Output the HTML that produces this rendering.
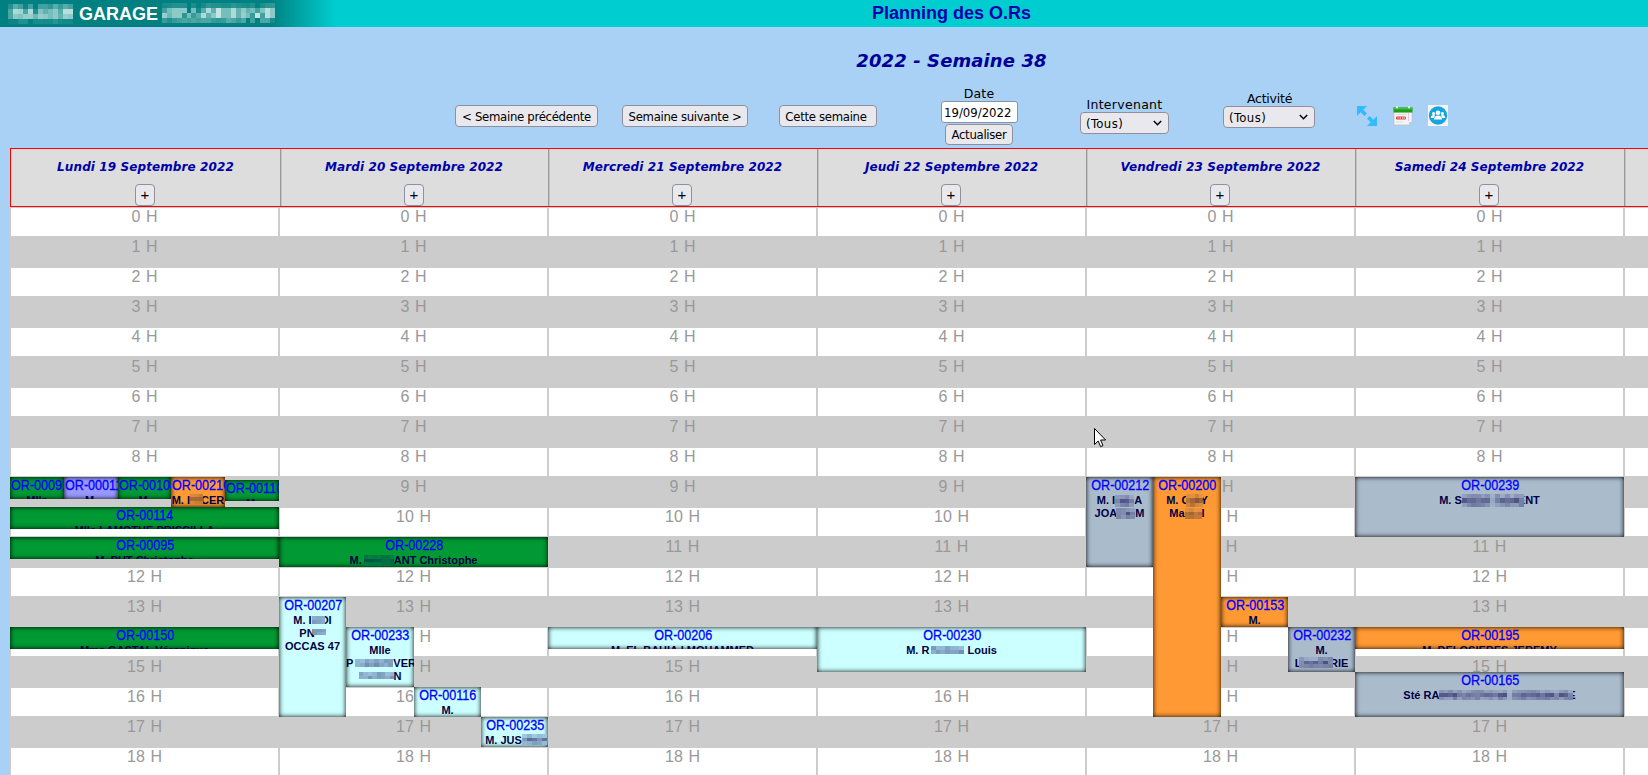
<!DOCTYPE html><html lang="fr"><head><meta charset="utf-8"><title>Planning des O.Rs</title><style>
*{box-sizing:border-box;margin:0;padding:0}
html,body{width:1648px;height:775px;overflow:hidden;background:#A9D0F5;}
body{font-family:"DejaVu Sans","Liberation Sans",sans-serif;font-size:13px;color:#000;position:relative}
#page{position:absolute;left:0;top:0;width:1903px;height:775px;overflow:hidden}
#top{position:absolute;left:0;top:0;width:1903px;height:27px;background:linear-gradient(to right,#008080 0px,#008080 270px,#00CDD0 335px,#00CDD0 100%)}
#top .g{position:absolute;left:79px;top:4px;font:bold 18px/21px "Liberation Sans",sans-serif;color:#fff;white-space:nowrap}
#top .t{position:absolute;left:0;width:1903px;top:3px;text-align:center;font:bold 18px/21px "Liberation Sans",sans-serif;color:#0000AA;white-space:nowrap}
h2{letter-spacing:.1px;position:absolute;left:0;width:1903px;top:50px;text-align:center;font:italic bold 18px/22px "DejaVu Sans",sans-serif;color:#000099;white-space:nowrap}
.btn{overflow:hidden;position:absolute;height:22px;border:1px solid #8F8F9D;border-radius:4px;background:#E9E9ED;font:13px/21px "DejaVu Sans Condensed","DejaVu Sans",sans-serif;text-align:center;white-space:nowrap;color:#000;letter-spacing:-0.3px}
.lbl{position:absolute;font:12.5px/16px "DejaVu Sans",sans-serif;text-align:center;white-space:nowrap}
.inp{overflow:hidden;position:absolute;border:1px solid #8F8F9D;border-radius:3px;background:#fff;font:13px/22px "DejaVu Sans Condensed","DejaVu Sans",sans-serif;padding-left:2px;white-space:nowrap}
.sel{overflow:hidden;position:absolute;height:22px;border:1px solid #8F8F9D;border-radius:4px;background:#E9E9ED;font:13px/21px "DejaVu Sans Condensed","DejaVu Sans",sans-serif;padding-left:5px;white-space:nowrap;letter-spacing:.4px}
.sel svg{position:absolute;right:6px;top:7px}
#hd{position:absolute;left:10px;top:148px;width:1883px;height:59px;background:#DDDDDD;border:1px solid #FF0000}
.th{position:absolute;top:0;height:57px;text-align:center;font:italic bold 12px/15px "DejaVu Sans",sans-serif;color:#0000AA;white-space:nowrap;padding-top:11px;letter-spacing:.1px}
.thd{position:absolute;top:0;height:57px;width:2px;background:linear-gradient(to right,#999 0,#999 1px,#c4c4c4 1px)}
.plus{letter-spacing:0;position:absolute;top:35px;width:20px;height:22px;border:1px solid #8F8F9D;border-radius:4px;background:#E9E9ED;font:15px/20px "Liberation Sans",sans-serif;color:#000;font-style:normal;font-weight:normal;text-align:center}
#grid{position:absolute;left:10px;top:207px;width:1883px;height:580px;background:#CCCCCC}
.c{position:absolute;background:#fff;height:28px}
.h{position:absolute;width:267px;text-align:center;font:16px/18px "Liberation Sans",sans-serif;color:#999999;white-space:nowrap;word-spacing:1.2px}
.e{position:absolute;overflow:hidden;text-align:center;padding-top:1px;box-shadow:inset 0 0 5px #000;font:bold 11px/13px "Liberation Sans",sans-serif;color:#000044;white-space:normal}
.e div{white-space:nowrap}.e div svg{position:relative;z-index:1}
.e b{display:block;position:relative;top:-1px;padding-left:1px;font:normal 14px/16px "Liberation Sans",sans-serif;color:#0000FF;white-space:nowrap;-webkit-text-stroke:.3px #0000FF}
.e b span{display:inline-block;transform:scaleX(.9);transform-origin:50% 50%}
.e.nar b{text-align:left;padding-left:1px}.e.nar b span{transform-origin:0 50%}
.gr{background:#009933}.or{background:#FF9933}.cy{background:#CCFFFF}.lv{background:#9999FF}.sl{background:#AABBCC}
</style></head><body><div id="page">
<div id="top"><svg style="position:absolute;left:8px;top:4px" width="65" height="20" viewBox="0 0 65 20" preserveAspectRatio="none" shape-rendering="crispEdges"><rect x="0" y="0" width="5" height="5" fill="rgba(215,240,236,0.15)"/><rect x="5" y="0" width="5" height="5" fill="rgba(215,240,236,0.4)"/><rect x="10" y="0" width="5" height="5" fill="rgba(215,240,236,0.3)"/><rect x="15" y="0" width="5" height="5" fill="rgba(215,240,236,0.05)"/><rect x="20" y="0" width="5" height="5" fill="rgba(215,240,236,0.3)"/><rect x="30" y="0" width="5" height="5" fill="rgba(215,240,236,0.3)"/><rect x="35" y="0" width="5" height="5" fill="rgba(215,240,236,0.3)"/><rect x="40" y="0" width="5" height="5" fill="rgba(215,240,236,0.22)"/><rect x="45" y="0" width="5" height="5" fill="rgba(215,240,236,0.4)"/><rect x="50" y="0" width="5" height="5" fill="rgba(215,240,236,0.25)"/><rect x="55" y="0" width="5" height="5" fill="rgba(215,240,236,0.4)"/><rect x="60" y="0" width="5" height="5" fill="rgba(215,240,236,0.3)"/><rect x="0" y="5" width="5" height="5" fill="rgba(215,240,236,0.35)"/><rect x="5" y="5" width="5" height="5" fill="rgba(215,240,236,0.8)"/><rect x="10" y="5" width="5" height="5" fill="rgba(215,240,236,0.75)"/><rect x="15" y="5" width="5" height="5" fill="rgba(215,240,236,0.35)"/><rect x="20" y="5" width="5" height="5" fill="rgba(215,240,236,0.8)"/><rect x="25" y="5" width="5" height="5" fill="rgba(215,240,236,0.15)"/><rect x="30" y="5" width="5" height="5" fill="rgba(215,240,236,0.6)"/><rect x="35" y="5" width="5" height="5" fill="rgba(215,240,236,0.45)"/><rect x="40" y="5" width="5" height="5" fill="rgba(215,240,236,0.55)"/><rect x="45" y="5" width="5" height="5" fill="rgba(215,240,236,0.65)"/><rect x="50" y="5" width="5" height="5" fill="rgba(215,240,236,0.4)"/><rect x="55" y="5" width="5" height="5" fill="rgba(215,240,236,0.85)"/><rect x="60" y="5" width="5" height="5" fill="rgba(215,240,236,0.85)"/><rect x="0" y="10" width="5" height="5" fill="rgba(215,240,236,0.35)"/><rect x="5" y="10" width="5" height="5" fill="rgba(215,240,236,0.65)"/><rect x="10" y="10" width="5" height="5" fill="rgba(215,240,236,0.6)"/><rect x="15" y="10" width="5" height="5" fill="rgba(215,240,236,0.7)"/><rect x="20" y="10" width="5" height="5" fill="rgba(215,240,236,0.7)"/><rect x="25" y="10" width="5" height="5" fill="rgba(215,240,236,0.5)"/><rect x="30" y="10" width="5" height="5" fill="rgba(215,240,236,0.7)"/><rect x="35" y="10" width="5" height="5" fill="rgba(215,240,236,0.65)"/><rect x="40" y="10" width="5" height="5" fill="rgba(215,240,236,0.55)"/><rect x="45" y="10" width="5" height="5" fill="rgba(215,240,236,0.65)"/><rect x="50" y="10" width="5" height="5" fill="rgba(215,240,236,0.45)"/><rect x="55" y="10" width="5" height="5" fill="rgba(215,240,236,0.7)"/><rect x="60" y="10" width="5" height="5" fill="rgba(215,240,236,0.65)"/><rect x="0" y="15" width="5" height="5" fill="rgba(215,240,236,0.05)"/><rect x="5" y="15" width="5" height="5" fill="rgba(215,240,236,0.05)"/><rect x="10" y="15" width="5" height="5" fill="rgba(215,240,236,0.15)"/><rect x="15" y="15" width="5" height="5" fill="rgba(215,240,236,0.15)"/><rect x="25" y="15" width="5" height="5" fill="rgba(215,240,236,0.1)"/><rect x="30" y="15" width="5" height="5" fill="rgba(215,240,236,0.12)"/><rect x="35" y="15" width="5" height="5" fill="rgba(215,240,236,0.1)"/><rect x="40" y="15" width="5" height="5" fill="rgba(215,240,236,0.1)"/><rect x="45" y="15" width="5" height="5" fill="rgba(215,240,236,0.18)"/><rect x="50" y="15" width="5" height="5" fill="rgba(215,240,236,0.1)"/><rect x="55" y="15" width="5" height="5" fill="rgba(215,240,236,0.08)"/><rect x="60" y="15" width="5" height="5" fill="rgba(215,240,236,0.08)"/></svg><span class="g">GARAGE</span><svg style="position:absolute;left:162px;top:3px" width="113" height="20" viewBox="0 0 115 20" preserveAspectRatio="none" shape-rendering="crispEdges"><rect x="0" y="0" width="5" height="5" fill="rgba(215,240,236,0.1)"/><rect x="5" y="0" width="5" height="5" fill="rgba(215,240,236,0.12)"/><rect x="10" y="0" width="5" height="5" fill="rgba(215,240,236,0.15)"/><rect x="15" y="0" width="5" height="5" fill="rgba(215,240,236,0.15)"/><rect x="20" y="0" width="5" height="5" fill="rgba(215,240,236,0.15)"/><rect x="30" y="0" width="5" height="5" fill="rgba(215,240,236,0.12)"/><rect x="35" y="0" width="5" height="5" fill="rgba(215,240,236,0.02)"/><rect x="40" y="0" width="5" height="5" fill="rgba(215,240,236,0.1)"/><rect x="45" y="0" width="5" height="5" fill="rgba(215,240,236,0.2)"/><rect x="50" y="0" width="5" height="5" fill="rgba(215,240,236,0.15)"/><rect x="55" y="0" width="5" height="5" fill="rgba(215,240,236,0.15)"/><rect x="60" y="0" width="5" height="5" fill="rgba(215,240,236,0.12)"/><rect x="65" y="0" width="5" height="5" fill="rgba(215,240,236,0.12)"/><rect x="70" y="0" width="5" height="5" fill="rgba(215,240,236,0.2)"/><rect x="75" y="0" width="5" height="5" fill="rgba(215,240,236,0.15)"/><rect x="80" y="0" width="5" height="5" fill="rgba(215,240,236,0.12)"/><rect x="85" y="0" width="5" height="5" fill="rgba(215,240,236,0.1)"/><rect x="90" y="0" width="5" height="5" fill="rgba(215,240,236,0.15)"/><rect x="95" y="0" width="5" height="5" fill="rgba(215,240,236,0.02)"/><rect x="100" y="0" width="5" height="5" fill="rgba(215,240,236,0.12)"/><rect x="105" y="0" width="5" height="5" fill="rgba(215,240,236,0.2)"/><rect x="110" y="0" width="5" height="5" fill="rgba(215,240,236,0.2)"/><rect x="0" y="5" width="5" height="5" fill="rgba(215,240,236,0.3)"/><rect x="5" y="5" width="5" height="5" fill="rgba(215,240,236,0.55)"/><rect x="10" y="5" width="5" height="5" fill="rgba(215,240,236,0.65)"/><rect x="15" y="5" width="5" height="5" fill="rgba(215,240,236,0.65)"/><rect x="20" y="5" width="5" height="5" fill="rgba(215,240,236,0.65)"/><rect x="30" y="5" width="5" height="5" fill="rgba(215,240,236,0.55)"/><rect x="35" y="5" width="5" height="5" fill="rgba(215,240,236,0.1)"/><rect x="40" y="5" width="5" height="5" fill="rgba(215,240,236,0.4)"/><rect x="45" y="5" width="5" height="5" fill="rgba(215,240,236,0.8)"/><rect x="50" y="5" width="5" height="5" fill="rgba(215,240,236,0.45)"/><rect x="55" y="5" width="5" height="5" fill="rgba(215,240,236,0.9)"/><rect x="60" y="5" width="5" height="5" fill="rgba(215,240,236,0.55)"/><rect x="65" y="5" width="5" height="5" fill="rgba(215,240,236,0.55)"/><rect x="70" y="5" width="5" height="5" fill="rgba(215,240,236,0.8)"/><rect x="75" y="5" width="5" height="5" fill="rgba(215,240,236,0.45)"/><rect x="80" y="5" width="5" height="5" fill="rgba(215,240,236,0.65)"/><rect x="85" y="5" width="5" height="5" fill="rgba(215,240,236,0.45)"/><rect x="90" y="5" width="5" height="5" fill="rgba(215,240,236,0.55)"/><rect x="95" y="5" width="5" height="5" fill="rgba(215,240,236,0.3)"/><rect x="100" y="5" width="5" height="5" fill="rgba(215,240,236,0.6)"/><rect x="105" y="5" width="5" height="5" fill="rgba(215,240,236,0.85)"/><rect x="110" y="5" width="5" height="5" fill="rgba(215,240,236,0.65)"/><rect x="0" y="10" width="5" height="5" fill="rgba(215,240,236,0.7)"/><rect x="5" y="10" width="5" height="5" fill="rgba(215,240,236,0.5)"/><rect x="10" y="10" width="5" height="5" fill="rgba(215,240,236,0.65)"/><rect x="15" y="10" width="5" height="5" fill="rgba(215,240,236,0.65)"/><rect x="20" y="10" width="5" height="5" fill="rgba(215,240,236,0.2)"/><rect x="25" y="10" width="5" height="5" fill="rgba(215,240,236,0.55)"/><rect x="30" y="10" width="5" height="5" fill="rgba(215,240,236,0.25)"/><rect x="35" y="10" width="5" height="5" fill="rgba(215,240,236,0.4)"/><rect x="40" y="10" width="5" height="5" fill="rgba(215,240,236,0.8)"/><rect x="45" y="10" width="5" height="5" fill="rgba(215,240,236,0.45)"/><rect x="50" y="10" width="5" height="5" fill="rgba(215,240,236,0.65)"/><rect x="55" y="10" width="5" height="5" fill="rgba(215,240,236,0.9)"/><rect x="60" y="10" width="5" height="5" fill="rgba(215,240,236,0.55)"/><rect x="65" y="10" width="5" height="5" fill="rgba(215,240,236,0.55)"/><rect x="70" y="10" width="5" height="5" fill="rgba(215,240,236,0.8)"/><rect x="75" y="10" width="5" height="5" fill="rgba(215,240,236,0.45)"/><rect x="80" y="10" width="5" height="5" fill="rgba(215,240,236,0.7)"/><rect x="85" y="10" width="5" height="5" fill="rgba(215,240,236,0.55)"/><rect x="90" y="10" width="5" height="5" fill="rgba(215,240,236,0.25)"/><rect x="95" y="10" width="5" height="5" fill="rgba(215,240,236,0.9)"/><rect x="100" y="10" width="5" height="5" fill="rgba(215,240,236,0.3)"/><rect x="105" y="10" width="5" height="5" fill="rgba(215,240,236,0.85)"/><rect x="110" y="10" width="5" height="5" fill="rgba(215,240,236,0.65)"/><rect x="0" y="15" width="5" height="5" fill="rgba(215,240,236,0.25)"/><rect x="5" y="15" width="5" height="5" fill="rgba(215,240,236,0.15)"/><rect x="10" y="15" width="5" height="5" fill="rgba(215,240,236,0.25)"/><rect x="15" y="15" width="5" height="5" fill="rgba(215,240,236,0.3)"/><rect x="20" y="15" width="5" height="5" fill="rgba(215,240,236,0.35)"/><rect x="25" y="15" width="5" height="5" fill="rgba(215,240,236,0.3)"/><rect x="30" y="15" width="5" height="5" fill="rgba(215,240,236,0.35)"/><rect x="35" y="15" width="5" height="5" fill="rgba(215,240,236,0.3)"/><rect x="40" y="15" width="5" height="5" fill="rgba(215,240,236,0.35)"/><rect x="45" y="15" width="5" height="5" fill="rgba(215,240,236,0.35)"/><rect x="50" y="15" width="5" height="5" fill="rgba(215,240,236,0.25)"/><rect x="55" y="15" width="5" height="5" fill="rgba(215,240,236,0.22)"/><rect x="60" y="15" width="5" height="5" fill="rgba(215,240,236,0.25)"/><rect x="65" y="15" width="5" height="5" fill="rgba(215,240,236,0.4)"/><rect x="70" y="15" width="5" height="5" fill="rgba(215,240,236,0.35)"/><rect x="75" y="15" width="5" height="5" fill="rgba(215,240,236,0.25)"/><rect x="80" y="15" width="5" height="5" fill="rgba(215,240,236,0.35)"/><rect x="90" y="15" width="5" height="5" fill="rgba(215,240,236,0.3)"/><rect x="100" y="15" width="5" height="5" fill="rgba(215,240,236,0.35)"/><rect x="105" y="15" width="5" height="5" fill="rgba(215,240,236,0.35)"/><rect x="110" y="15" width="5" height="5" fill="rgba(215,240,236,0.1)"/></svg><div class="t">Planning des O.Rs</div></div>
<h2>2022 - Semaine 38</h2>
<div class="btn" style="left:455px;top:105px;width:143px">&lt; Semaine précédente</div>
<div class="btn" style="left:622px;top:105px;width:126px">Semaine suivante &gt;</div>
<div class="btn" style="left:779px;top:105px;width:98px;padding-right:4px">Cette semaine</div>
<div class="lbl" style="left:929px;top:86px;width:100px;letter-spacing:.17px">Date</div>
<div class="inp" style="left:941px;top:101px;width:77px;height:22px">19/09/2022</div>
<div class="btn" style="left:945px;top:124px;width:68px;height:21px;line-height:19px">Actualiser</div>
<div class="lbl" style="left:1074.500px;top:97px;width:100px;letter-spacing:.29px">Intervenant</div>
<div class="sel" style="left:1080px;top:112px;width:89px">(Tous)<svg width="9" height="6" viewBox="0 0 9 6"><path d="M0.800 1 L4.500 4.700 L8.200 1" fill="none" stroke="#000" stroke-width="1.500"/></svg></div>
<div class="lbl" style="left:1219.500px;top:91px;width:100px;letter-spacing:-.23px">Activité</div>
<div class="sel" style="left:1223px;top:106px;width:92px">(Tous)<svg width="9" height="6" viewBox="0 0 9 6"><path d="M0.800 1 L4.500 4.700 L8.200 1" fill="none" stroke="#000" stroke-width="1.500"/></svg></div>
<svg style="position:absolute;left:1357px;top:106px" width="20" height="20" viewBox="0 0 20 20"><g fill="#33BBFF"><path d="M0 0H10L6.300 3.700L10 7.400L7.400 10L3.700 6.300L0 10Z"/><path d="M20 20H10L13.700 16.300L10 12.600L12.600 10L16.300 13.700L20 10Z"/></g></svg>
<svg style="position:absolute;left:1393px;top:106px" width="20" height="20" viewBox="0 0 20 20"><path d="M1 6h18v10l-3 3H1z" fill="#f4f4f4" stroke="#bbb" stroke-width=".6"/><path d="M0.500 1.500h19v5h-19z" fill="#1e9a1e"/><rect x="0.500" y="1.500" width="19" height="2" fill="#3fbf3f"/><rect x="3" y="0" width="2" height="2.500" rx="1" fill="#eee"/><rect x="15" y="0" width="2" height="2.500" rx="1" fill="#eee"/><rect x="3" y="10.500" width="10" height="3" rx="1" fill="#e04040"/><rect x="3" y="8" width="11" height="1" fill="#ddd"/><rect x="3" y="15.500" width="7" height="1" fill="#ddd"/><g fill="#c9f"><rect x="15" y="7.500" width="1" height="1"/><rect x="15" y="9.500" width="1" height="1"/><rect x="15" y="11.500" width="1" height="1"/><rect x="15" y="13.500" width="1" height="1"/></g><g fill="#fff"><rect x="4.500" y="11.500" width="1" height="1"/><rect x="6.500" y="11.500" width="1.500" height="1"/><rect x="9" y="11.500" width="1" height="1"/><rect x="10.500" y="11.500" width="1.500" height="1"/></g><path d="M16 19v-3h3z" fill="#ccc"/></svg>
<svg style="position:absolute;left:1428px;top:105px" width="20" height="21" viewBox="0 0 20 21"><rect width="20" height="21" fill="#F8F5F0"/><circle cx="10" cy="10.500" r="9.200" fill="#12A5E0"/><g fill="#fff"><circle cx="10" cy="7.800" r="2.300"/><path d="M6 14.500c0-3 1.800-4 4-4s4 1 4 4z"/><circle cx="5.600" cy="8.500" r="1.600"/><path d="M2.800 13c0-2.200 1.300-3 2.800-3 .8 0 1.300.2 1.700.5-1 .8-1.500 1.700-1.600 2.500z"/><circle cx="14.400" cy="8.500" r="1.600"/><path d="M17.200 13c0-2.200-1.300-3-2.800-3-.8 0-1.300.2-1.700.5 1 .8 1.500 1.700 1.600 2.500z"/></g></svg>
<div id="hd">
<div class="th" style="left:0px;width:269px">Lundi 19 Septembre 2022<div class="plus" style="left:124px">+</div></div>
<div class="th" style="left:269px;width:268px">Mardi 20 Septembre 2022<div class="plus" style="left:124px">+</div></div>
<div class="thd" style="left:269px"></div>
<div class="th" style="left:537px;width:269px">Mercredi 21 Septembre 2022<div class="plus" style="left:124px">+</div></div>
<div class="thd" style="left:537px"></div>
<div class="th" style="left:806px;width:269px">Jeudi 22 Septembre 2022<div class="plus" style="left:124px">+</div></div>
<div class="thd" style="left:806px"></div>
<div class="th" style="left:1075px;width:269px">Vendredi 23 Septembre 2022<div class="plus" style="left:124px">+</div></div>
<div class="thd" style="left:1075px"></div>
<div class="th" style="left:1344px;width:269px">Samedi 24 Septembre 2022<div class="plus" style="left:124px">+</div></div>
<div class="thd" style="left:1344px"></div>
<div class="th" style="left:1613px;width:269px">Dimanche 25 Septembre 2022<div class="plus" style="left:124px">+</div></div>
<div class="thd" style="left:1613px"></div>
</div>
<div id="grid">
<div class="c" style="left:1px;top:1px;width:267px"></div>
<div class="c" style="left:270px;top:1px;width:267px"></div>
<div class="c" style="left:539px;top:1px;width:267px"></div>
<div class="c" style="left:808px;top:1px;width:267px"></div>
<div class="c" style="left:1077px;top:1px;width:267px"></div>
<div class="c" style="left:1346px;top:1px;width:267px"></div>
<div class="c" style="left:1615px;top:1px;width:267px"></div>
<div class="c" style="left:1px;top:61px;width:267px"></div>
<div class="c" style="left:270px;top:61px;width:267px"></div>
<div class="c" style="left:539px;top:61px;width:267px"></div>
<div class="c" style="left:808px;top:61px;width:267px"></div>
<div class="c" style="left:1077px;top:61px;width:267px"></div>
<div class="c" style="left:1346px;top:61px;width:267px"></div>
<div class="c" style="left:1615px;top:61px;width:267px"></div>
<div class="c" style="left:1px;top:121px;width:267px"></div>
<div class="c" style="left:270px;top:121px;width:267px"></div>
<div class="c" style="left:539px;top:121px;width:267px"></div>
<div class="c" style="left:808px;top:121px;width:267px"></div>
<div class="c" style="left:1077px;top:121px;width:267px"></div>
<div class="c" style="left:1346px;top:121px;width:267px"></div>
<div class="c" style="left:1615px;top:121px;width:267px"></div>
<div class="c" style="left:1px;top:181px;width:267px"></div>
<div class="c" style="left:270px;top:181px;width:267px"></div>
<div class="c" style="left:539px;top:181px;width:267px"></div>
<div class="c" style="left:808px;top:181px;width:267px"></div>
<div class="c" style="left:1077px;top:181px;width:267px"></div>
<div class="c" style="left:1346px;top:181px;width:267px"></div>
<div class="c" style="left:1615px;top:181px;width:267px"></div>
<div class="c" style="left:1px;top:241px;width:267px"></div>
<div class="c" style="left:270px;top:241px;width:267px"></div>
<div class="c" style="left:539px;top:241px;width:267px"></div>
<div class="c" style="left:808px;top:241px;width:267px"></div>
<div class="c" style="left:1077px;top:241px;width:267px"></div>
<div class="c" style="left:1346px;top:241px;width:267px"></div>
<div class="c" style="left:1615px;top:241px;width:267px"></div>
<div class="c" style="left:1px;top:301px;width:267px"></div>
<div class="c" style="left:270px;top:301px;width:267px"></div>
<div class="c" style="left:539px;top:301px;width:267px"></div>
<div class="c" style="left:808px;top:301px;width:267px"></div>
<div class="c" style="left:1077px;top:301px;width:267px"></div>
<div class="c" style="left:1346px;top:301px;width:267px"></div>
<div class="c" style="left:1615px;top:301px;width:267px"></div>
<div class="c" style="left:1px;top:361px;width:267px"></div>
<div class="c" style="left:270px;top:361px;width:267px"></div>
<div class="c" style="left:539px;top:361px;width:267px"></div>
<div class="c" style="left:808px;top:361px;width:267px"></div>
<div class="c" style="left:1077px;top:361px;width:267px"></div>
<div class="c" style="left:1346px;top:361px;width:267px"></div>
<div class="c" style="left:1615px;top:361px;width:267px"></div>
<div class="c" style="left:1px;top:421px;width:267px"></div>
<div class="c" style="left:270px;top:421px;width:267px"></div>
<div class="c" style="left:539px;top:421px;width:267px"></div>
<div class="c" style="left:808px;top:421px;width:267px"></div>
<div class="c" style="left:1077px;top:421px;width:267px"></div>
<div class="c" style="left:1346px;top:421px;width:267px"></div>
<div class="c" style="left:1615px;top:421px;width:267px"></div>
<div class="c" style="left:1px;top:481px;width:267px"></div>
<div class="c" style="left:270px;top:481px;width:267px"></div>
<div class="c" style="left:539px;top:481px;width:267px"></div>
<div class="c" style="left:808px;top:481px;width:267px"></div>
<div class="c" style="left:1077px;top:481px;width:267px"></div>
<div class="c" style="left:1346px;top:481px;width:267px"></div>
<div class="c" style="left:1615px;top:481px;width:267px"></div>
<div class="c" style="left:1px;top:541px;width:267px"></div>
<div class="c" style="left:270px;top:541px;width:267px"></div>
<div class="c" style="left:539px;top:541px;width:267px"></div>
<div class="c" style="left:808px;top:541px;width:267px"></div>
<div class="c" style="left:1077px;top:541px;width:267px"></div>
<div class="c" style="left:1346px;top:541px;width:267px"></div>
<div class="c" style="left:1615px;top:541px;width:267px"></div>
<div class="h" style="left:1px;top:1px">0 H</div>
<div class="h" style="left:270px;top:1px">0 H</div>
<div class="h" style="left:539px;top:1px">0 H</div>
<div class="h" style="left:808px;top:1px">0 H</div>
<div class="h" style="left:1077px;top:1px">0 H</div>
<div class="h" style="left:1346px;top:1px">0 H</div>
<div class="h" style="left:1615px;top:1px">0 H</div>
<div class="h" style="left:1px;top:31px">1 H</div>
<div class="h" style="left:270px;top:31px">1 H</div>
<div class="h" style="left:539px;top:31px">1 H</div>
<div class="h" style="left:808px;top:31px">1 H</div>
<div class="h" style="left:1077px;top:31px">1 H</div>
<div class="h" style="left:1346px;top:31px">1 H</div>
<div class="h" style="left:1615px;top:31px">1 H</div>
<div class="h" style="left:1px;top:61px">2 H</div>
<div class="h" style="left:270px;top:61px">2 H</div>
<div class="h" style="left:539px;top:61px">2 H</div>
<div class="h" style="left:808px;top:61px">2 H</div>
<div class="h" style="left:1077px;top:61px">2 H</div>
<div class="h" style="left:1346px;top:61px">2 H</div>
<div class="h" style="left:1615px;top:61px">2 H</div>
<div class="h" style="left:1px;top:91px">3 H</div>
<div class="h" style="left:270px;top:91px">3 H</div>
<div class="h" style="left:539px;top:91px">3 H</div>
<div class="h" style="left:808px;top:91px">3 H</div>
<div class="h" style="left:1077px;top:91px">3 H</div>
<div class="h" style="left:1346px;top:91px">3 H</div>
<div class="h" style="left:1615px;top:91px">3 H</div>
<div class="h" style="left:1px;top:121px">4 H</div>
<div class="h" style="left:270px;top:121px">4 H</div>
<div class="h" style="left:539px;top:121px">4 H</div>
<div class="h" style="left:808px;top:121px">4 H</div>
<div class="h" style="left:1077px;top:121px">4 H</div>
<div class="h" style="left:1346px;top:121px">4 H</div>
<div class="h" style="left:1615px;top:121px">4 H</div>
<div class="h" style="left:1px;top:151px">5 H</div>
<div class="h" style="left:270px;top:151px">5 H</div>
<div class="h" style="left:539px;top:151px">5 H</div>
<div class="h" style="left:808px;top:151px">5 H</div>
<div class="h" style="left:1077px;top:151px">5 H</div>
<div class="h" style="left:1346px;top:151px">5 H</div>
<div class="h" style="left:1615px;top:151px">5 H</div>
<div class="h" style="left:1px;top:181px">6 H</div>
<div class="h" style="left:270px;top:181px">6 H</div>
<div class="h" style="left:539px;top:181px">6 H</div>
<div class="h" style="left:808px;top:181px">6 H</div>
<div class="h" style="left:1077px;top:181px">6 H</div>
<div class="h" style="left:1346px;top:181px">6 H</div>
<div class="h" style="left:1615px;top:181px">6 H</div>
<div class="h" style="left:1px;top:211px">7 H</div>
<div class="h" style="left:270px;top:211px">7 H</div>
<div class="h" style="left:539px;top:211px">7 H</div>
<div class="h" style="left:808px;top:211px">7 H</div>
<div class="h" style="left:1077px;top:211px">7 H</div>
<div class="h" style="left:1346px;top:211px">7 H</div>
<div class="h" style="left:1615px;top:211px">7 H</div>
<div class="h" style="left:1px;top:241px">8 H</div>
<div class="h" style="left:270px;top:241px">8 H</div>
<div class="h" style="left:539px;top:241px">8 H</div>
<div class="h" style="left:808px;top:241px">8 H</div>
<div class="h" style="left:1077px;top:241px">8 H</div>
<div class="h" style="left:1346px;top:241px">8 H</div>
<div class="h" style="left:1615px;top:241px">8 H</div>
<div class="h" style="left:1px;top:271px">9 H</div>
<div class="h" style="left:270px;top:271px">9 H</div>
<div class="h" style="left:539px;top:271px">9 H</div>
<div class="h" style="left:808px;top:271px">9 H</div>
<div class="h" style="left:1077px;top:271px">9 H</div>
<div class="h" style="left:1346px;top:271px">9 H</div>
<div class="h" style="left:1615px;top:271px">9 H</div>
<div class="h" style="left:1px;top:301px">10 H</div>
<div class="h" style="left:270px;top:301px">10 H</div>
<div class="h" style="left:539px;top:301px">10 H</div>
<div class="h" style="left:808px;top:301px">10 H</div>
<div class="h" style="left:1077px;top:301px">10 H</div>
<div class="h" style="left:1346px;top:301px">10 H</div>
<div class="h" style="left:1615px;top:301px">10 H</div>
<div class="h" style="left:1px;top:331px">11 H</div>
<div class="h" style="left:270px;top:331px">11 H</div>
<div class="h" style="left:539px;top:331px">11 H</div>
<div class="h" style="left:808px;top:331px">11 H</div>
<div class="h" style="left:1077px;top:331px">11 H</div>
<div class="h" style="left:1346px;top:331px">11 H</div>
<div class="h" style="left:1615px;top:331px">11 H</div>
<div class="h" style="left:1px;top:361px">12 H</div>
<div class="h" style="left:270px;top:361px">12 H</div>
<div class="h" style="left:539px;top:361px">12 H</div>
<div class="h" style="left:808px;top:361px">12 H</div>
<div class="h" style="left:1077px;top:361px">12 H</div>
<div class="h" style="left:1346px;top:361px">12 H</div>
<div class="h" style="left:1615px;top:361px">12 H</div>
<div class="h" style="left:1px;top:391px">13 H</div>
<div class="h" style="left:270px;top:391px">13 H</div>
<div class="h" style="left:539px;top:391px">13 H</div>
<div class="h" style="left:808px;top:391px">13 H</div>
<div class="h" style="left:1077px;top:391px">13 H</div>
<div class="h" style="left:1346px;top:391px">13 H</div>
<div class="h" style="left:1615px;top:391px">13 H</div>
<div class="h" style="left:1px;top:421px">14 H</div>
<div class="h" style="left:270px;top:421px">14 H</div>
<div class="h" style="left:539px;top:421px">14 H</div>
<div class="h" style="left:808px;top:421px">14 H</div>
<div class="h" style="left:1077px;top:421px">14 H</div>
<div class="h" style="left:1346px;top:421px">14 H</div>
<div class="h" style="left:1615px;top:421px">14 H</div>
<div class="h" style="left:1px;top:451px">15 H</div>
<div class="h" style="left:270px;top:451px">15 H</div>
<div class="h" style="left:539px;top:451px">15 H</div>
<div class="h" style="left:808px;top:451px">15 H</div>
<div class="h" style="left:1077px;top:451px">15 H</div>
<div class="h" style="left:1346px;top:451px">15 H</div>
<div class="h" style="left:1615px;top:451px">15 H</div>
<div class="h" style="left:1px;top:481px">16 H</div>
<div class="h" style="left:270px;top:481px">16 H</div>
<div class="h" style="left:539px;top:481px">16 H</div>
<div class="h" style="left:808px;top:481px">16 H</div>
<div class="h" style="left:1077px;top:481px">16 H</div>
<div class="h" style="left:1346px;top:481px">16 H</div>
<div class="h" style="left:1615px;top:481px">16 H</div>
<div class="h" style="left:1px;top:511px">17 H</div>
<div class="h" style="left:270px;top:511px">17 H</div>
<div class="h" style="left:539px;top:511px">17 H</div>
<div class="h" style="left:808px;top:511px">17 H</div>
<div class="h" style="left:1077px;top:511px">17 H</div>
<div class="h" style="left:1346px;top:511px">17 H</div>
<div class="h" style="left:1615px;top:511px">17 H</div>
<div class="h" style="left:1px;top:541px">18 H</div>
<div class="h" style="left:270px;top:541px">18 H</div>
<div class="h" style="left:539px;top:541px">18 H</div>
<div class="h" style="left:808px;top:541px">18 H</div>
<div class="h" style="left:1077px;top:541px">18 H</div>
<div class="h" style="left:1346px;top:541px">18 H</div>
<div class="h" style="left:1615px;top:541px">18 H</div>
<div class="h" style="left:1px;top:571px">19 H</div>
<div class="h" style="left:270px;top:571px">19 H</div>
<div class="h" style="left:539px;top:571px">19 H</div>
<div class="h" style="left:808px;top:571px">19 H</div>
<div class="h" style="left:1077px;top:571px">19 H</div>
<div class="h" style="left:1346px;top:571px">19 H</div>
<div class="h" style="left:1615px;top:571px">19 H</div>
</div>
<div class="e gr nar" style="left:10px;top:477px;width:54px;height:22px"><b><span>OR-00092</span></b><div>Mlle</div></div>
<div class="e lv nar" style="left:64px;top:477px;width:54px;height:22px"><b><span>OR-00011</span></b><div>M.</div></div>
<div class="e gr nar" style="left:118px;top:477px;width:53px;height:22px"><b><span>OR-00104</span></b><div>M.</div></div>
<div class="e or nar" style="left:171px;top:477px;width:54px;height:30px"><b><span>OR-00210</span></b><div>M. I<svg style="vertical-align:0px;margin-right:-2px" width="13" height="10" viewBox="0 0 13 10" shape-rendering="crispEdges"><path fill="#d78a3b" d="M0.0 0.0h4.4v3.4h-4.4z"/><path fill="#d3873a" d="M4.3 0.0h4.4v3.4h-4.4z"/><path fill="#c47c39" d="M8.7 0.0h4.4v3.4h-4.4z"/><path fill="#aa6937" d="M0.0 3.3h4.4v3.4h-4.4z"/><path fill="#a76737" d="M4.3 3.3h4.4v3.4h-4.4z"/><path fill="#a26436" d="M8.7 3.3h4.4v3.4h-4.4z"/><path fill="#d4883a" d="M0.0 6.7h4.4v3.4h-4.4z"/><path fill="#c77e39" d="M4.3 6.7h4.4v3.4h-4.4z"/><path fill="#c27b39" d="M8.7 6.7h4.4v3.4h-4.4z"/></svg>CER</div></div>
<div class="e gr nar" style="left:225px;top:480px;width:54px;height:21px"><b><span>OR-00110</span></b><div>M.</div></div>
<div class="e gr" style="left:10px;top:507px;width:269px;height:22px"><b><span>OR-00114</span></b><div>Mlle LAMOTHE PRISCILLA</div></div>
<div class="e gr" style="left:10px;top:537px;width:269px;height:22px"><b><span>OR-00095</span></b><div>M. PUT Christophe</div></div>
<div class="e gr" style="left:10px;top:627px;width:269px;height:22px"><b><span>OR-00150</span></b><div>Mme GASTAL Véronique</div></div>
<div class="e gr" style="left:279px;top:537px;width:269px;height:30px"><b><span>OR-00228</span></b><div>M. <svg style="vertical-align:-2px;margin-left:-1px" width="30" height="11" viewBox="0 0 30 11" shape-rendering="crispEdges"><path fill="#007341" d="M0.0 0.0h4.4v3.8h-4.4z"/><path fill="#007f3e" d="M4.3 0.0h4.4v3.8h-4.4z"/><path fill="#007b3f" d="M8.6 0.0h4.4v3.8h-4.4z"/><path fill="#007f3e" d="M12.9 0.0h4.4v3.8h-4.4z"/><path fill="#007241" d="M17.1 0.0h4.4v3.8h-4.4z"/><path fill="#007441" d="M21.4 0.0h4.4v3.8h-4.4z"/><path fill="#00803e" d="M25.7 0.0h4.4v3.8h-4.4z"/><path fill="#005648" d="M0.0 3.7h4.4v3.8h-4.4z"/><path fill="#005647" d="M4.3 3.7h4.4v3.8h-4.4z"/><path fill="#005f45" d="M8.6 3.7h4.4v3.8h-4.4z"/><path fill="#006045" d="M12.9 3.7h4.4v3.8h-4.4z"/><path fill="#006e42" d="M17.1 3.7h4.4v3.8h-4.4z"/><path fill="#007241" d="M21.4 3.7h4.4v3.8h-4.4z"/><path fill="#006345" d="M25.7 3.7h4.4v3.8h-4.4z"/><path fill="#00793f" d="M0.0 7.3h4.4v3.8h-4.4z"/><path fill="#007740" d="M4.3 7.3h4.4v3.8h-4.4z"/><path fill="#007640" d="M8.6 7.3h4.4v3.8h-4.4z"/><path fill="#007a3f" d="M12.9 7.3h4.4v3.8h-4.4z"/><path fill="#007241" d="M17.1 7.3h4.4v3.8h-4.4z"/><path fill="#007341" d="M21.4 7.3h4.4v3.8h-4.4z"/><path fill="#006c43" d="M25.7 7.3h4.4v3.8h-4.4z"/></svg>ANT Christophe</div></div>
<div class="e cy" style="left:279px;top:597px;width:67px;height:120px"><b><span>OR-00207</span></b><div>M. I<svg style="vertical-align:0px;margin-right:-4px" width="13" height="8" viewBox="0 0 13 8" shape-rendering="crispEdges"><path fill="#8aaecb" d="M0.0 0.0h4.4v4.1h-4.4z"/><path fill="#86a9c7" d="M4.3 0.0h4.4v4.1h-4.4z"/><path fill="#8aafcc" d="M8.7 0.0h4.4v4.1h-4.4z"/><path fill="#7c9abc" d="M0.0 4.0h4.4v4.1h-4.4z"/><path fill="#82a2c2" d="M4.3 4.0h4.4v4.1h-4.4z"/><path fill="#87aac8" d="M8.7 4.0h4.4v4.1h-4.4z"/></svg>DI</div><div>PN<svg style="vertical-align:2px;margin-left:-2px" width="13" height="6" viewBox="0 0 13 6" shape-rendering="crispEdges"><path fill="#7c9abc" d="M0.0 0.0h4.4v3.1h-4.4z"/><path fill="#7c9abc" d="M4.3 0.0h4.4v3.1h-4.4z"/><path fill="#80a1c1" d="M8.7 0.0h4.4v3.1h-4.4z"/><path fill="#7a98ba" d="M0.0 3.0h4.4v3.1h-4.4z"/><path fill="#86a8c7" d="M4.3 3.0h4.4v3.1h-4.4z"/><path fill="#88acca" d="M8.7 3.0h4.4v3.1h-4.4z"/></svg></div><div>OCCAS 47</div></div>
<div class="e cy" style="left:346px;top:627px;width:68px;height:60px"><b><span>OR-00233</span></b><div>Mlle</div><div>P<svg style="vertical-align:0px;margin-left:2px" width="38" height="8" viewBox="0 0 38 8" shape-rendering="crispEdges"><path fill="#90b7d3" d="M0.0 0.0h4.8v4.1h-4.8z"/><path fill="#97c0da" d="M4.8 0.0h4.8v4.1h-4.8z"/><path fill="#83a4c3" d="M9.5 0.0h4.8v4.1h-4.8z"/><path fill="#8db3cf" d="M14.2 0.0h4.8v4.1h-4.8z"/><path fill="#80a0c1" d="M19.0 0.0h4.8v4.1h-4.8z"/><path fill="#8eb3cf" d="M23.8 0.0h4.8v4.1h-4.8z"/><path fill="#7d9cbd" d="M28.5 0.0h4.8v4.1h-4.8z"/><path fill="#80a0c1" d="M33.2 0.0h4.8v4.1h-4.8z"/><path fill="#8fb5d1" d="M0.0 4.0h4.8v4.1h-4.8z"/><path fill="#89acca" d="M4.8 4.0h4.8v4.1h-4.8z"/><path fill="#7590b4" d="M9.5 4.0h4.8v4.1h-4.8z"/><path fill="#81a2c2" d="M14.2 4.0h4.8v4.1h-4.8z"/><path fill="#738db2" d="M19.0 4.0h4.8v4.1h-4.8z"/><path fill="#83a5c4" d="M23.8 4.0h4.8v4.1h-4.8z"/><path fill="#8db2cf" d="M28.5 4.0h4.8v4.1h-4.8z"/><path fill="#7d9cbd" d="M33.2 4.0h4.8v4.1h-4.8z"/></svg>VER</div><div><svg style="vertical-align:1px" width="35" height="7" viewBox="0 0 35 7" shape-rendering="crispEdges"><path fill="#82a3c3" d="M0.0 0.0h4.5v3.6h-4.5z"/><path fill="#91b8d3" d="M4.4 0.0h4.5v3.6h-4.5z"/><path fill="#96bfd9" d="M8.8 0.0h4.5v3.6h-4.5z"/><path fill="#8fb5d1" d="M13.1 0.0h4.5v3.6h-4.5z"/><path fill="#7d9cbd" d="M17.5 0.0h4.5v3.6h-4.5z"/><path fill="#83a4c4" d="M21.9 0.0h4.5v3.6h-4.5z"/><path fill="#95bed8" d="M26.2 0.0h4.5v3.6h-4.5z"/><path fill="#92b9d4" d="M30.6 0.0h4.5v3.6h-4.5z"/><path fill="#8cb1ce" d="M0.0 3.5h4.5v3.6h-4.5z"/><path fill="#8db3cf" d="M4.4 3.5h4.5v3.6h-4.5z"/><path fill="#7895b7" d="M8.8 3.5h4.5v3.6h-4.5z"/><path fill="#8aaecb" d="M13.1 3.5h4.5v3.6h-4.5z"/><path fill="#7f9ebf" d="M17.5 3.5h4.5v3.6h-4.5z"/><path fill="#82a3c3" d="M21.9 3.5h4.5v3.6h-4.5z"/><path fill="#89adcb" d="M26.2 3.5h4.5v3.6h-4.5z"/><path fill="#7a97ba" d="M30.6 3.5h4.5v3.6h-4.5z"/></svg>N</div></div>
<div class="e cy" style="left:414px;top:687px;width:67px;height:30px"><b><span>OR-00116</span></b><div>M.</div></div>
<div class="e cy" style="left:481px;top:717px;width:67px;height:30px"><b><span>OR-00235</span></b><div><span style="padding-left:3px">M. JUS</span><svg style="vertical-align:-1px" width="25" height="11" viewBox="0 0 25 11" shape-rendering="crispEdges"><path fill="#9dc9e1" d="M0.0 0.0h5.1v3.8h-5.1z"/><path fill="#8eb4d0" d="M5.0 0.0h5.1v3.8h-5.1z"/><path fill="#9dc9e1" d="M10.0 0.0h5.1v3.8h-5.1z"/><path fill="#95bdd7" d="M15.0 0.0h5.1v3.8h-5.1z"/><path fill="#9bc6de" d="M20.0 0.0h5.1v3.8h-5.1z"/><path fill="#7d9bbd" d="M0.0 3.7h5.1v3.8h-5.1z"/><path fill="#5c6d98" d="M5.0 3.7h5.1v3.8h-5.1z"/><path fill="#6478a1" d="M10.0 3.7h5.1v3.8h-5.1z"/><path fill="#7b99bb" d="M15.0 3.7h5.1v3.8h-5.1z"/><path fill="#60739d" d="M20.0 3.7h5.1v3.8h-5.1z"/><path fill="#91b8d3" d="M0.0 7.3h5.1v3.8h-5.1z"/><path fill="#8cb0cd" d="M5.0 7.3h5.1v3.8h-5.1z"/><path fill="#7e9ebf" d="M10.0 7.3h5.1v3.8h-5.1z"/><path fill="#85a6c5" d="M15.0 7.3h5.1v3.8h-5.1z"/><path fill="#94bcd7" d="M20.0 7.3h5.1v3.8h-5.1z"/></svg></div></div>
<div class="e cy" style="left:548px;top:627px;width:269px;height:22px"><b><span>OR-00206</span></b><div>M. EL BAHIA I MOHAMMED</div></div>
<div class="e cy" style="left:817px;top:627px;width:269px;height:45px"><b><span>OR-00230</span></b><div>M. R<svg style="vertical-align:0px;margin-left:2px" width="33" height="8" viewBox="0 0 33 8" shape-rendering="crispEdges"><path fill="#7c9bbc" d="M0.0 0.0h4.8v4.1h-4.8z"/><path fill="#93bad5" d="M4.7 0.0h4.8v4.1h-4.8z"/><path fill="#91b8d4" d="M9.4 0.0h4.8v4.1h-4.8z"/><path fill="#82a3c3" d="M14.1 0.0h4.8v4.1h-4.8z"/><path fill="#8fb5d1" d="M18.9 0.0h4.8v4.1h-4.8z"/><path fill="#90b7d2" d="M23.6 0.0h4.8v4.1h-4.8z"/><path fill="#97c0d9" d="M28.3 0.0h4.8v4.1h-4.8z"/><path fill="#8cb1ce" d="M0.0 4.0h4.8v4.1h-4.8z"/><path fill="#7e9dbe" d="M4.7 4.0h4.8v4.1h-4.8z"/><path fill="#88abc9" d="M9.4 4.0h4.8v4.1h-4.8z"/><path fill="#7e9dbe" d="M14.1 4.0h4.8v4.1h-4.8z"/><path fill="#84a6c5" d="M18.9 4.0h4.8v4.1h-4.8z"/><path fill="#82a3c2" d="M23.6 4.0h4.8v4.1h-4.8z"/><path fill="#738eb2" d="M28.3 4.0h4.8v4.1h-4.8z"/></svg> Louis</div></div>
<div class="e sl" style="left:1086px;top:477px;width:67px;height:90px"><b><span>OR-00212</span></b><div>M. I<svg style="vertical-align:-3px" width="19" height="12" viewBox="0 0 19 12" shape-rendering="crispEdges"><path fill="#8e9bbb" d="M0.0 0.0h4.8v4.1h-4.8z"/><path fill="#8b97b8" d="M4.8 0.0h4.8v4.1h-4.8z"/><path fill="#818cb0" d="M9.5 0.0h4.8v4.1h-4.8z"/><path fill="#99a6c4" d="M14.2 0.0h4.8v4.1h-4.8z"/><path fill="#7a85aa" d="M0.0 4.0h4.8v4.1h-4.8z"/><path fill="#505787" d="M4.8 4.0h4.8v4.1h-4.8z"/><path fill="#555c8b" d="M9.5 4.0h4.8v4.1h-4.8z"/><path fill="#757fa5" d="M14.2 4.0h4.8v4.1h-4.8z"/><path fill="#8d99ba" d="M0.0 8.0h4.8v4.1h-4.8z"/><path fill="#7a84aa" d="M4.8 8.0h4.8v4.1h-4.8z"/><path fill="#737da4" d="M9.5 8.0h4.8v4.1h-4.8z"/><path fill="#8d99b9" d="M14.2 8.0h4.8v4.1h-4.8z"/></svg>A</div><div>JOA<svg style="vertical-align:-2px;margin-left:-1px" width="19" height="11" viewBox="0 0 19 11" shape-rendering="crispEdges"><path fill="#7e89ad" d="M0.0 0.0h4.8v3.8h-4.8z"/><path fill="#818caf" d="M4.8 0.0h4.8v3.8h-4.8z"/><path fill="#8a96b7" d="M9.5 0.0h4.8v3.8h-4.8z"/><path fill="#909dbd" d="M14.2 0.0h4.8v3.8h-4.8z"/><path fill="#7d88ac" d="M0.0 3.7h4.8v3.8h-4.8z"/><path fill="#818caf" d="M4.8 3.7h4.8v3.8h-4.8z"/><path fill="#4d5384" d="M9.5 3.7h4.8v3.8h-4.8z"/><path fill="#7580a6" d="M14.2 3.7h4.8v3.8h-4.8z"/><path fill="#7b86ab" d="M0.0 7.3h4.8v3.8h-4.8z"/><path fill="#8a97b8" d="M4.8 7.3h4.8v3.8h-4.8z"/><path fill="#7781a7" d="M9.5 7.3h4.8v3.8h-4.8z"/><path fill="#7f8aae" d="M14.2 7.3h4.8v3.8h-4.8z"/></svg>M</div></div>
<div class="e or" style="left:1153px;top:477px;width:68px;height:240px"><b><span>OR-00200</span></b><div>M. C<svg style="vertical-align:-3px;margin-left:-3px;margin-right:-3px" width="17" height="13" viewBox="0 0 17 13" shape-rendering="crispEdges"><path fill="#dd8e3b" d="M0.0 0.0h4.3v4.4h-4.3z"/><path fill="#e2923c" d="M4.2 0.0h4.3v4.4h-4.3z"/><path fill="#cc823a" d="M8.5 0.0h4.3v4.4h-4.3z"/><path fill="#e6953c" d="M12.8 0.0h4.3v4.4h-4.3z"/><path fill="#b97438" d="M0.0 4.3h4.3v4.4h-4.3z"/><path fill="#a46537" d="M4.2 4.3h4.3v4.4h-4.3z"/><path fill="#915735" d="M8.5 4.3h4.3v4.4h-4.3z"/><path fill="#a06236" d="M12.8 4.3h4.3v4.4h-4.3z"/><path fill="#d0853a" d="M0.0 8.7h4.3v4.4h-4.3z"/><path fill="#b77338" d="M4.2 8.7h4.3v4.4h-4.3z"/><path fill="#d3873a" d="M8.5 8.7h4.3v4.4h-4.3z"/><path fill="#db8d3b" d="M12.8 8.7h4.3v4.4h-4.3z"/></svg>Y</div><div>Ma<svg style="vertical-align:-2px" width="17" height="11" viewBox="0 0 17 11" shape-rendering="crispEdges"><path fill="#de8f3b" d="M0.0 0.0h4.3v3.8h-4.3z"/><path fill="#d78a3b" d="M4.2 0.0h4.3v3.8h-4.3z"/><path fill="#e7953c" d="M8.5 0.0h4.3v3.8h-4.3z"/><path fill="#e2923c" d="M12.8 0.0h4.3v3.8h-4.3z"/><path fill="#b06e38" d="M0.0 3.7h4.3v3.8h-4.3z"/><path fill="#a36436" d="M4.2 3.7h4.3v3.8h-4.3z"/><path fill="#c07939" d="M8.5 3.7h4.3v3.8h-4.3z"/><path fill="#b16e38" d="M12.8 3.7h4.3v3.8h-4.3z"/><path fill="#b87338" d="M0.0 7.3h4.3v3.8h-4.3z"/><path fill="#b47138" d="M4.2 7.3h4.3v3.8h-4.3z"/><path fill="#c17a39" d="M8.5 7.3h4.3v3.8h-4.3z"/><path fill="#c07939" d="M12.8 7.3h4.3v3.8h-4.3z"/></svg>l</div></div>
<div class="e or" style="left:1221px;top:597px;width:67px;height:30px"><b><span>OR-00153</span></b><div>M.</div></div>
<div class="e sl" style="left:1288px;top:627px;width:67px;height:45px"><b><span>OR-00232</span></b><div>M.</div><div>L<svg style="vertical-align:-1px;margin-left:-2px;margin-right:-3px" width="33.5" height="11" viewBox="0 0 33.5 11" shape-rendering="crispEdges"><path fill="#8b97b8" d="M0.0 0.0h4.9v3.8h-4.9z"/><path fill="#9aa8c5" d="M4.8 0.0h4.9v3.8h-4.9z"/><path fill="#9eacc8" d="M9.6 0.0h4.9v3.8h-4.9z"/><path fill="#9eacc8" d="M14.4 0.0h4.9v3.8h-4.9z"/><path fill="#808baf" d="M19.1 0.0h4.9v3.8h-4.9z"/><path fill="#8793b5" d="M23.9 0.0h4.9v3.8h-4.9z"/><path fill="#7e89ad" d="M28.7 0.0h4.9v3.8h-4.9z"/><path fill="#828db0" d="M0.0 3.7h4.9v3.8h-4.9z"/><path fill="#5f6793" d="M4.8 3.7h4.9v3.8h-4.9z"/><path fill="#68719b" d="M9.6 3.7h4.9v3.8h-4.9z"/><path fill="#5a628f" d="M14.4 3.7h4.9v3.8h-4.9z"/><path fill="#717ba2" d="M19.1 3.7h4.9v3.8h-4.9z"/><path fill="#4b5182" d="M23.9 3.7h4.9v3.8h-4.9z"/><path fill="#7f8aae" d="M28.7 3.7h4.9v3.8h-4.9z"/><path fill="#808caf" d="M0.0 7.3h4.9v3.8h-4.9z"/><path fill="#7a85aa" d="M4.8 7.3h4.9v3.8h-4.9z"/><path fill="#747ea5" d="M9.6 7.3h4.9v3.8h-4.9z"/><path fill="#7a85aa" d="M14.4 7.3h4.9v3.8h-4.9z"/><path fill="#7b86ab" d="M19.1 7.3h4.9v3.8h-4.9z"/><path fill="#7882a8" d="M23.9 7.3h4.9v3.8h-4.9z"/><path fill="#747ea5" d="M28.7 7.3h4.9v3.8h-4.9z"/></svg>RIE</div></div>
<div class="e sl" style="left:1355px;top:477px;width:269px;height:60px"><b><span>OR-00239</span></b><div>M. S<svg style="vertical-align:-3px" width="28" height="13" viewBox="0 0 28 13" shape-rendering="crispEdges"><path fill="#93a0bf" d="M0.0 0.0h4.8v4.4h-4.8z"/><path fill="#8793b5" d="M4.7 0.0h4.8v4.4h-4.8z"/><path fill="#808baf" d="M9.3 0.0h4.8v4.4h-4.8z"/><path fill="#818cb0" d="M14.0 0.0h4.8v4.4h-4.8z"/><path fill="#919dbd" d="M18.7 0.0h4.8v4.4h-4.8z"/><path fill="#848fb2" d="M23.3 0.0h4.8v4.4h-4.8z"/><path fill="#525989" d="M0.0 4.3h4.8v4.4h-4.8z"/><path fill="#636b96" d="M4.7 4.3h4.8v4.4h-4.8z"/><path fill="#606894" d="M9.3 4.3h4.8v4.4h-4.8z"/><path fill="#6d779f" d="M14.0 4.3h4.8v4.4h-4.8z"/><path fill="#626b96" d="M18.7 4.3h4.8v4.4h-4.8z"/><path fill="#616995" d="M23.3 4.3h4.8v4.4h-4.8z"/><path fill="#919dbd" d="M0.0 8.7h4.8v4.4h-4.8z"/><path fill="#7d88ad" d="M4.7 8.7h4.8v4.4h-4.8z"/><path fill="#717ba2" d="M9.3 8.7h4.8v4.4h-4.8z"/><path fill="#757fa6" d="M14.0 8.7h4.8v4.4h-4.8z"/><path fill="#7a85aa" d="M18.7 8.7h4.8v4.4h-4.8z"/><path fill="#8692b4" d="M23.3 8.7h4.8v4.4h-4.8z"/></svg><svg style="vertical-align:-3px" width="5" height="13" viewBox="0 0 5 13" shape-rendering="crispEdges"><path opacity=".25" fill="#8691b4" d="M0.0 0.0h5.1v4.4h-5.1z"/><path opacity=".25" fill="#626b96" d="M0.0 4.3h5.1v4.4h-5.1z"/><path opacity=".25" fill="#8490b2" d="M0.0 8.7h5.1v4.4h-5.1z"/></svg><svg style="vertical-align:-3px;margin-right:-6px" width="29" height="13" viewBox="0 0 29 13" shape-rendering="crispEdges"><path fill="#828eb1" d="M0.0 0.0h4.9v4.4h-4.9z"/><path fill="#9caac6" d="M4.8 0.0h4.9v4.4h-4.9z"/><path fill="#8591b3" d="M9.7 0.0h4.9v4.4h-4.9z"/><path fill="#9eacc8" d="M14.5 0.0h4.9v4.4h-4.9z"/><path fill="#8a96b7" d="M19.3 0.0h4.9v4.4h-4.9z"/><path fill="#8e9bbb" d="M24.2 0.0h4.9v4.4h-4.9z"/><path fill="#7680a6" d="M0.0 4.3h4.9v4.4h-4.9z"/><path fill="#5c6490" d="M4.8 4.3h4.9v4.4h-4.9z"/><path fill="#67709a" d="M9.7 4.3h4.9v4.4h-4.9z"/><path fill="#606994" d="M14.5 4.3h4.9v4.4h-4.9z"/><path fill="#4f5686" d="M19.3 4.3h4.9v4.4h-4.9z"/><path fill="#747fa5" d="M24.2 4.3h4.9v4.4h-4.9z"/><path fill="#93a0bf" d="M0.0 8.7h4.9v4.4h-4.9z"/><path fill="#8995b6" d="M4.8 8.7h4.9v4.4h-4.9z"/><path fill="#7c87ab" d="M9.7 8.7h4.9v4.4h-4.9z"/><path fill="#8c99b9" d="M14.5 8.7h4.9v4.4h-4.9z"/><path fill="#8d9aba" d="M19.3 8.7h4.9v4.4h-4.9z"/><path fill="#747ea5" d="M24.2 8.7h4.9v4.4h-4.9z"/></svg>ENT</div></div>
<div class="e or" style="left:1355px;top:627px;width:269px;height:22px"><b><span>OR-00195</span></b><div>M. DELOSIERES JEREMY</div></div>
<div class="e sl" style="left:1355px;top:672px;width:269px;height:45px"><b><span>OR-00165</span></b><div>Sté RA<svg style="vertical-align:-1px" width="68" height="10" viewBox="0 0 68 10" shape-rendering="crispEdges"><path fill="#8894b6" d="M0.0 0.0h4.6v3.4h-4.6z"/><path fill="#909cbc" d="M4.5 0.0h4.6v3.4h-4.6z"/><path fill="#808caf" d="M9.1 0.0h4.6v3.4h-4.6z"/><path fill="#94a1bf" d="M13.6 0.0h4.6v3.4h-4.6z"/><path fill="#8894b6" d="M18.1 0.0h4.6v3.4h-4.6z"/><path fill="#98a6c3" d="M22.7 0.0h4.6v3.4h-4.6z"/><path fill="#909dbc" d="M27.2 0.0h4.6v3.4h-4.6z"/><path fill="#838fb2" d="M31.7 0.0h4.6v3.4h-4.6z"/><path fill="#808bae" d="M36.3 0.0h4.6v3.4h-4.6z"/><path fill="#818caf" d="M40.8 0.0h4.6v3.4h-4.6z"/><path fill="#929fbe" d="M45.3 0.0h4.6v3.4h-4.6z"/><path fill="#8b97b8" d="M49.9 0.0h4.6v3.4h-4.6z"/><path fill="#94a1c0" d="M54.4 0.0h4.6v3.4h-4.6z"/><path fill="#9aa8c5" d="M58.9 0.0h4.6v3.4h-4.6z"/><path fill="#8e9abb" d="M63.5 0.0h4.6v3.4h-4.6z"/><path fill="#545b8a" d="M0.0 3.3h4.6v3.4h-4.6z"/><path fill="#535a89" d="M4.5 3.3h4.6v3.4h-4.6z"/><path fill="#5b6390" d="M9.1 3.3h4.6v3.4h-4.6z"/><path fill="#4e5485" d="M13.6 3.3h4.6v3.4h-4.6z"/><path fill="#737da4" d="M18.1 3.3h4.6v3.4h-4.6z"/><path fill="#7984a9" d="M22.7 3.3h4.6v3.4h-4.6z"/><path fill="#6a739c" d="M27.2 3.3h4.6v3.4h-4.6z"/><path fill="#737da4" d="M31.7 3.3h4.6v3.4h-4.6z"/><path fill="#7781a7" d="M36.3 3.3h4.6v3.4h-4.6z"/><path fill="#6c759e" d="M40.8 3.3h4.6v3.4h-4.6z"/><path fill="#606894" d="M45.3 3.3h4.6v3.4h-4.6z"/><path fill="#67709a" d="M49.9 3.3h4.6v3.4h-4.6z"/><path fill="#717ba2" d="M54.4 3.3h4.6v3.4h-4.6z"/><path fill="#545b8a" d="M58.9 3.3h4.6v3.4h-4.6z"/><path fill="#4c5283" d="M63.5 3.3h4.6v3.4h-4.6z"/><path fill="#848fb2" d="M0.0 6.7h4.6v3.4h-4.6z"/><path fill="#919dbd" d="M4.5 6.7h4.6v3.4h-4.6z"/><path fill="#929fbe" d="M9.1 6.7h4.6v3.4h-4.6z"/><path fill="#757fa6" d="M13.6 6.7h4.6v3.4h-4.6z"/><path fill="#929fbe" d="M18.1 6.7h4.6v3.4h-4.6z"/><path fill="#7b86ab" d="M22.7 6.7h4.6v3.4h-4.6z"/><path fill="#808baf" d="M27.2 6.7h4.6v3.4h-4.6z"/><path fill="#8995b6" d="M31.7 6.7h4.6v3.4h-4.6z"/><path fill="#7883a8" d="M36.3 6.7h4.6v3.4h-4.6z"/><path fill="#93a0be" d="M40.8 6.7h4.6v3.4h-4.6z"/><path fill="#8f9bbb" d="M45.3 6.7h4.6v3.4h-4.6z"/><path fill="#848fb2" d="M49.9 6.7h4.6v3.4h-4.6z"/><path fill="#929fbe" d="M54.4 6.7h4.6v3.4h-4.6z"/><path fill="#7781a7" d="M58.9 6.7h4.6v3.4h-4.6z"/><path fill="#8b97b8" d="M63.5 6.7h4.6v3.4h-4.6z"/></svg><svg style="vertical-align:-1px" width="5" height="10" viewBox="0 0 5 10" shape-rendering="crispEdges"><path opacity=".25" fill="#9aa8c5" d="M0.0 0.0h5.1v3.4h-5.1z"/><path opacity=".25" fill="#808baf" d="M0.0 3.3h5.1v3.4h-5.1z"/><path opacity=".25" fill="#7e89ad" d="M0.0 6.7h5.1v3.4h-5.1z"/></svg><svg style="vertical-align:-1px;margin-right:-5px" width="61" height="10" viewBox="0 0 61 10" shape-rendering="crispEdges"><path fill="#909cbc" d="M0.0 0.0h4.8v3.4h-4.8z"/><path fill="#8995b7" d="M4.7 0.0h4.8v3.4h-4.8z"/><path fill="#8894b6" d="M9.4 0.0h4.8v3.4h-4.8z"/><path fill="#838fb2" d="M14.1 0.0h4.8v3.4h-4.8z"/><path fill="#7e89ad" d="M18.8 0.0h4.8v3.4h-4.8z"/><path fill="#8793b5" d="M23.5 0.0h4.8v3.4h-4.8z"/><path fill="#98a6c3" d="M28.2 0.0h4.8v3.4h-4.8z"/><path fill="#8f9bbb" d="M32.8 0.0h4.8v3.4h-4.8z"/><path fill="#99a6c4" d="M37.5 0.0h4.8v3.4h-4.8z"/><path fill="#9eacc8" d="M42.2 0.0h4.8v3.4h-4.8z"/><path fill="#8f9bbb" d="M46.9 0.0h4.8v3.4h-4.8z"/><path fill="#8692b4" d="M51.6 0.0h4.8v3.4h-4.8z"/><path fill="#99a6c4" d="M56.3 0.0h4.8v3.4h-4.8z"/><path fill="#747ea4" d="M0.0 3.3h4.8v3.4h-4.8z"/><path fill="#6f79a1" d="M4.7 3.3h4.8v3.4h-4.8z"/><path fill="#5c6491" d="M9.4 3.3h4.8v3.4h-4.8z"/><path fill="#666e99" d="M14.1 3.3h4.8v3.4h-4.8z"/><path fill="#606994" d="M18.8 3.3h4.8v3.4h-4.8z"/><path fill="#58608e" d="M23.5 3.3h4.8v3.4h-4.8z"/><path fill="#6d769f" d="M28.2 3.3h4.8v3.4h-4.8z"/><path fill="#565e8c" d="M32.8 3.3h4.8v3.4h-4.8z"/><path fill="#505787" d="M37.5 3.3h4.8v3.4h-4.8z"/><path fill="#7e89ad" d="M42.2 3.3h4.8v3.4h-4.8z"/><path fill="#4f5586" d="M46.9 3.3h4.8v3.4h-4.8z"/><path fill="#5a628f" d="M51.6 3.3h4.8v3.4h-4.8z"/><path fill="#7b86ab" d="M56.3 3.3h4.8v3.4h-4.8z"/><path fill="#848fb2" d="M0.0 6.7h4.8v3.4h-4.8z"/><path fill="#7e89ad" d="M4.7 6.7h4.8v3.4h-4.8z"/><path fill="#747ea5" d="M9.4 6.7h4.8v3.4h-4.8z"/><path fill="#8692b4" d="M14.1 6.7h4.8v3.4h-4.8z"/><path fill="#808baf" d="M18.8 6.7h4.8v3.4h-4.8z"/><path fill="#757fa6" d="M23.5 6.7h4.8v3.4h-4.8z"/><path fill="#7882a8" d="M28.2 6.7h4.8v3.4h-4.8z"/><path fill="#737da4" d="M32.8 6.7h4.8v3.4h-4.8z"/><path fill="#838fb2" d="M37.5 6.7h4.8v3.4h-4.8z"/><path fill="#7d88ac" d="M42.2 6.7h4.8v3.4h-4.8z"/><path fill="#8c99b9" d="M46.9 6.7h4.8v3.4h-4.8z"/><path fill="#7a85aa" d="M51.6 6.7h4.8v3.4h-4.8z"/><path fill="#7782a7" d="M56.3 6.7h4.8v3.4h-4.8z"/></svg>E</div></div>
<svg style="position:absolute;left:1093px;top:427px" width="14" height="21" viewBox="-1 -1 14 21"><path d="M0.500 0.500V16.500L4.200 13L6.600 18.600L9 17.600L6.600 12H11.600Z" fill="#fff" stroke="#000" stroke-width="1" stroke-linejoin="miter"/></svg>
</div></body></html>
